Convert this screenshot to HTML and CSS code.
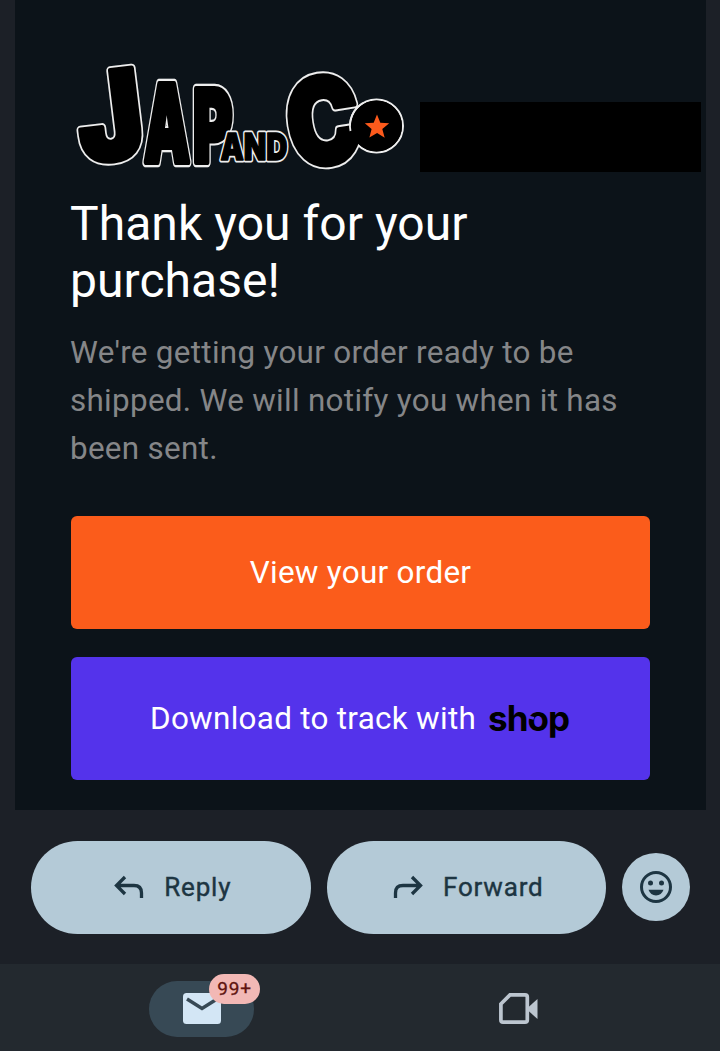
FILE: index.html
```html
<!DOCTYPE html>
<html lang="en">
<head>
  <meta charset="UTF-8" />
  <meta name="viewport" content="width=device-width, initial-scale=1.0"/>
  <title>Order confirmation</title>
  <link rel="stylesheet" href="styles.css">
</head>
<body>
  <main class="email">
    <div class="email-header">
      <svg class="logo" viewBox="70 56 340 120" role="img" aria-label="Jap and Co">
        <defs>
          <g id="word">
            <text transform="translate(82.500 163.500) rotate(-7) scale(.9 1)" font-size="122">J</text>
            <text transform="translate(144 162) scale(.54 1)" font-size="107">A</text>
            <text transform="translate(193 162) scale(.6 1)" font-size="100">P</text>
            <text transform="translate(294 169) rotate(-9) scale(.82 1)" font-size="119">C</text>
          </g>
          <text id="and" x="220.500" y="160" font-size="37" textLength="67" lengthAdjust="spacingAndGlyphs">AND</text>
        </defs>
        <use href="#word" class="logo-outline" />
        <circle cx="376.500" cy="126" r="26.500" class="logo-rim" />
        <use href="#word" class="logo-fill" />
        <circle cx="376.500" cy="126" r="25.500" />
        <path class="rim-arc" d="M350.500 131A26.500 26.500 0 0 1 363 103" />
        <use href="#and" class="and-outline" />
        <use href="#and" class="and-fill" />
        <path class="star" d="M377 114.500l3.300 8.300 8.900.4-6.900 5.700 2.400 8.800-7.600-4.800-7.700 4.500 2.200-8.500-6.800-5.700 8.900-.5z" />
      </svg>
      <div class="order-number"></div>
    </div>

    <div class="content">
      <h1>Thank you for your purchase!</h1>
      <p>We're getting your order ready to be shipped. We will notify you when it has been sent.</p>
      <button class="btn view">View your order</button>
      <button class="btn track">
        <span>Download to track with</span>
        <span class="shop">shop</span>
      </button>
    </div>
  </main>

  <div class="actions">
    <button class="pill">
      <svg class="arrow" width="30" height="24" viewBox="0 0 30 24">
        <path d="M11 2L2.500 10.500L11 19M3 10.500H20Q27.500 10.500 27.500 18V23" />
      </svg>
      <span class="reply">Reply</span>
    </button>
    <button class="pill">
      <svg class="arrow" width="30" height="24" viewBox="0 0 30 24">
        <path d="M19 2L27.500 10.500L19 19M27 10.500H10Q2.500 10.500 2.500 18V23" />
      </svg>
      <span class="forward">Forward</span>
    </button>
    <button class="emoji" aria-label="Add reaction">
      <svg width="32" height="32" viewBox="0 0 32 32">
        <circle cx="16" cy="16" r="14.500" fill="none" stroke="#1d3542" stroke-width="3" />
        <circle cx="10.500" cy="12" r="2.500" />
        <circle cx="21.500" cy="12" r="2.500" />
        <path d="M8.500 18.800H23.500Q21.500 24.500 16 24.500T8.500 18.800z" />
      </svg>
    </button>
  </div>

  <nav class="bottom-nav">
    <div class="tab">
      <div class="tab-active">
        <svg class="tab-icon" width="38" height="31" viewBox="0 0 38 31">
          <rect width="38" height="31" rx="3.500" fill="#d3e6f5" />
          <path d="M4 6L19 15.500L34 6" fill="none" stroke="#374955" stroke-width="3.500" />
        </svg>
        <span class="badge">99+</span>
      </div>
    </div>
    <div class="tab">
      <svg class="tab-icon" width="39" height="31" viewBox="0 0 39 31">
        <path d="M11 1.900H26Q28.300 1.900 28.300 4V27Q28.300 29.100 26 29.100H4Q1.900 29.100 1.900 27V11z" fill="none" stroke="#bcc5cf" stroke-width="3.700" />
        <path d="M29 14.500L38.500 6V26L29 17.500z" fill="#bcc5cf" />
      </svg>
    </div>
  </nav>
</body>
</html>
```
FILE: styles.css
```css
* {
  box-sizing: border-box;
}

body {
  margin: 0;
  height: 1051px;
  display: flex;
  flex-direction: column;
  overflow: hidden;
  background: #1c2027;
  font-family: Roboto, sans-serif;
}

button {
  border: none;
  padding: 0;
  font-family: inherit;
  cursor: pointer;
}

svg {
  display: block;
}

.email {
  width: 691px;
  height: 810px;
  margin-left: 15px;
  padding-top: 56px;
  background: #0c1319;
}

.email-header {
  display: flex;
  align-items: flex-end;
  height: 120px;
  padding: 0 5px 4px 55px;
  gap: 10px;
}

.logo {
  width: 340px;
  height: 120px;
  margin-bottom: -4px;
  font-family: Inter, sans-serif;
  font-weight: 900;
  stroke-linejoin: round;
}

.logo text {
  vector-effect: non-scaling-stroke;
}

.logo-outline {
  fill: #eee;
  stroke: #eee;
  stroke-width: 8.5px;
}

.logo-fill {
  fill: #000;
  stroke: #000;
  stroke-width: 5px;
}

.logo-rim {
  fill: #000;
  stroke: #eee;
  stroke-width: 2px;
}

.rim-arc {
  fill: none;
  stroke: #eee;
  stroke-width: 1.8px;
}

.and-outline {
  stroke: #eee;
  stroke-width: 5px;
}

.and-fill {
  fill: #000;
  stroke: #000;
  stroke-width: 1.5px;
}

.star {
  fill: #fc5a1c;
}

.order-number {
  width: 281px;
  height: 70px;
  background: #000;
}

.content {
  padding: 19px 56px 0 55px;
}

h1 {
  margin: 0 0 20px;
  width: 460px;
  color: #fff;
  font-size: 48px;
  font-weight: 400;
  line-height: 57px;
  letter-spacing: 0.05px;
}

p {
  margin: 0 0 43px;
  color: #858688;
  font-size: 31.4px;
  line-height: 48px;
  letter-spacing: 0.3px;
}

.btn {
  display: flex;
  align-items: center;
  justify-content: center;
  width: 579px;
  margin-left: 1px;
  border-radius: 6px;
  color: #fff;
  font-size: 31.4px;
}

.view {
  height: 113px;
  margin-bottom: 28px;
  background: #fb5c1b;
  letter-spacing: 0.3px;
}

.track {
  height: 123px;
  gap: 12px;
  padding-right: 2px;
  background: #5433eb;
  letter-spacing: 0.3px;
}

.shop {
  position: relative;
  top: -1px;
  color: #000;
  font-family: Inter, sans-serif;
  font-size: 35px;
  font-weight: 700;
  letter-spacing: -1px;
}

/* opening in the "o" of the shop wordmark */
.shop::after {
  content: "";
  position: absolute;
  left: 39px;
  top: 19px;
  width: 7px;
  height: 3px;
  background: #5433eb;
  transform: rotate(15deg);
}

.actions {
  display: flex;
  align-items: center;
  gap: 16px;
  height: 154px;
  padding: 0 30px 0 31px;
}

.pill {
  display: flex;
  align-items: center;
  justify-content: center;
  gap: 20px;
  width: 279.5px;
  height: 93px;
  padding-left: 4px;
  border-radius: 47px;
  background: #b4cad7;
  color: #1d3542;
  font-size: 26px;
  font-weight: 400;
  letter-spacing: 0.8px;
  -webkit-text-stroke: 0.4px #1d3542;
}

.arrow {
  fill: none;
  stroke: #1d3542;
  stroke-width: 3.3px;
}

.emoji {
  display: flex;
  align-items: center;
  justify-content: center;
  width: 68px;
  height: 68px;
  border-radius: 50%;
  background: #b4cad7;
  fill: #1d3542;
}

.bottom-nav {
  display: flex;
  height: 87px;
  padding: 0 43px;
  background: #23292f;
}

.tab {
  flex: 1;
  display: flex;
  align-items: center;
  justify-content: center;
  padding-top: 3px;
}

.tab-icon {
  margin-bottom: 2px;
}

.tab-active {
  position: relative;
  display: flex;
  align-items: center;
  justify-content: center;
  width: 105px;
  height: 56px;
  border-radius: 28px;
  background: #374955;
}

.badge {
  position: absolute;
  left: 60px;
  top: -7px;
  width: 51px;
  height: 30px;
  border-radius: 15px;
  background: #f2b8b5;
  color: #601410;
  font-size: 19px;
  line-height: 30px;
  text-align: center;
  letter-spacing: 0.8px;
  -webkit-text-stroke: 0.3px #601410;
}
```
